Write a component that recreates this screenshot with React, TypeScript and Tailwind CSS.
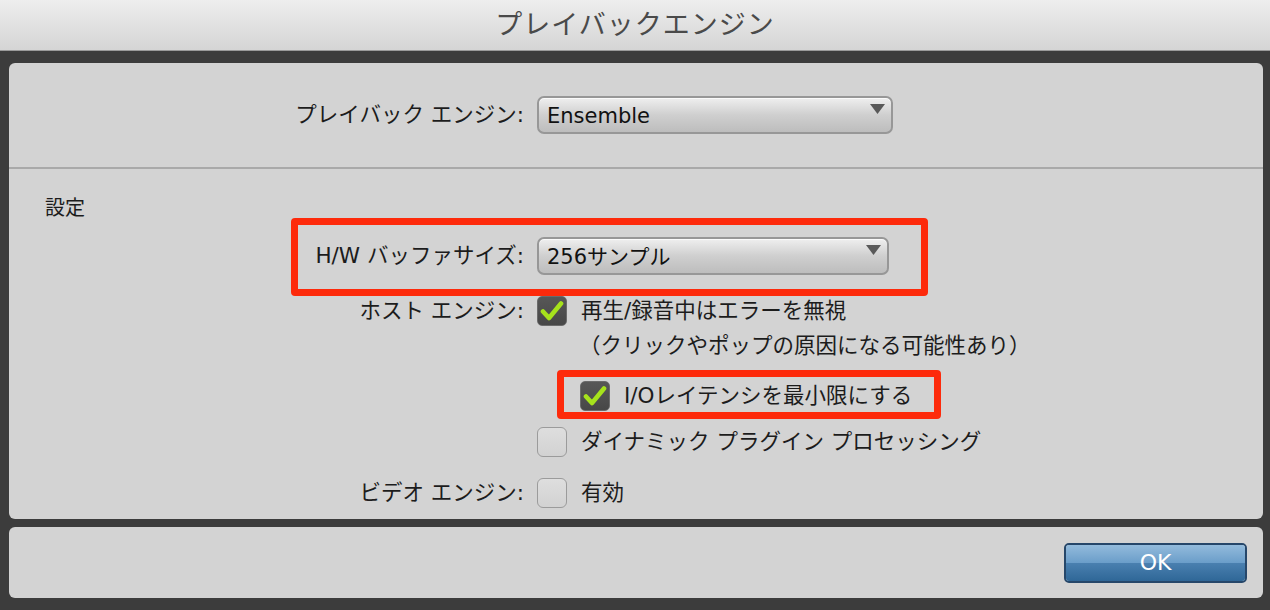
const font = { fontFamily: '"DejaVu Sans", "Noto Sans CJK JP", sans-serif' };

function Dropdown({ value, width }: { value: string; width: string }) {
  return (
    <div
      className={`relative flex h-[38px] items-center rounded-[7px] border-2 border-[#979797] bg-gradient-to-b from-[#efefef] via-[#cfcfcf] to-[#bdbdbd] pl-[8px] pt-[3px] text-[21px] text-[#111] shadow-[inset_0_1px_0_#fafafa] ${width}`}
    >
      <span className="leading-none">{value}</span>
      <svg className="absolute right-[6px] top-[6px]" width="15" height="10" viewBox="0 0 15 10">
        <path d="M0 0 L15 0 L7.5 10 Z" fill="#595959" />
      </svg>
    </div>
  );
}

function Checkbox({ checked }: { checked: boolean }) {
  if (checked) {
    return (
      <div className="flex h-[30px] w-[30px] shrink-0 items-center justify-center rounded-[5px] border border-[#6b6b6b] bg-gradient-to-b from-[#575757] to-[#474747]">
        <svg width="24" height="22" viewBox="0 0 24 22">
          <path
            d="M3 11.5 L9 18 L21 3.5"
            fill="none"
            stroke="#a6e21c"
            strokeWidth="4.6"
            strokeLinecap="round"
            strokeLinejoin="round"
          />
        </svg>
      </div>
    );
  }
  return (
    <div className="h-[30px] w-[30px] shrink-0 rounded-[6px] border-[1.5px] border-[#9b9b9b] bg-gradient-to-b from-[#dedede] to-[#d2d2d2]" />
  );
}

function Row({ label, children, className = "" }: { label?: string; children: React.ReactNode; className?: string }) {
  return (
    <div className={`flex items-center ${className}`}>
      <div className="w-[515px] shrink-0 text-right text-[21.5px] text-[#1c1c1c]">{label}</div>
      <div className="ml-[13px] flex items-center">{children}</div>
    </div>
  );
}

export default function App() {
  return (
    <div className="flex h-[610px] w-[1270px] flex-col bg-[#3c3c3c]" style={font}>
      {/* title bar */}
      <div className="flex h-[51px] shrink-0 items-center justify-center border-b border-[#9a9a9a] bg-gradient-to-b from-[#eeeeee] to-[#d5d5d5]">
        <span className="text-[27px] tracking-[1px] text-[#4a4a4a]">プレイバックエンジン</span>
      </div>

      <div className="flex flex-1 flex-col pl-[9px] pr-[7px] pt-[12px] pb-[12px]">
        {/* main panel */}
        <div className="flex h-[456px] flex-col rounded-[6px] bg-[#d3d3d3]">
          <div className="flex h-[104px] items-center">
            <Row label="プレイバック エンジン:" className="w-full">
              <Dropdown value="Ensemble" width="w-[356px]" />
            </Row>
          </div>
          <div className="h-[2px] bg-[#a9a9a9]" />

          <div className="flex flex-col">
            <div className="pl-[36px] pt-[27px] text-[20px] leading-[25px] text-[#1c1c1c]">設定</div>

            <div className="relative mt-[16px]">
              <Row label="H/W バッファサイズ:" className="h-[38px]">
                <Dropdown value="256サンプル" width="w-[352px]" />
              </Row>
              <div className="pointer-events-none absolute left-[282px] right-[335px] top-[-19px] bottom-[-21px] rounded-[4px] border-[7px] border-[#fd2a0b]" />
            </div>

            <Row label="ホスト エンジン:" className="mt-[21px] h-[30px]">
              <Checkbox checked />
              <span className="ml-[14px] text-[21.5px] text-[#1c1c1c]">再生/録音中はエラーを無視</span>
            </Row>

            <Row className="mt-[5px] h-[30px]">
              <span className="ml-[42px] text-[21.5px] text-[#1c1c1c]">（クリックやポップの原因になる可能性あり）</span>
            </Row>

            <div className="relative mt-[20px]">
              <Row className="h-[30px]">
                <div className="ml-[43px] flex items-center">
                  <Checkbox checked />
                  <span className="ml-[14px] text-[21.5px] text-[#1c1c1c]">I/Oレイテンシを最小限にする</span>
                </div>
              </Row>
              <div className="pointer-events-none absolute left-[548px] right-[322px] top-[-11px] bottom-[-8px] rounded-[4px] border-[7px] border-[#fd2a0b]" />
            </div>

            <Row className="mt-[16px] h-[30px]">
              <Checkbox checked={false} />
              <span className="ml-[14px] text-[21.5px] text-[#1c1c1c]">ダイナミック プラグイン プロセッシング</span>
            </Row>

            <Row label="ビデオ エンジン:" className="mt-[21px] h-[30px]">
              <Checkbox checked={false} />
              <span className="ml-[14px] text-[21.5px] text-[#1c1c1c]">有効</span>
            </Row>
          </div>
        </div>

        {/* bottom panel */}
        <div className="mt-[8px] flex h-[71px] items-center justify-end rounded-[6px] bg-[#d3d3d3] pr-[16px]">
          <button className="relative h-[40px] w-[183px] overflow-hidden rounded-[5px] border-2 border-[#26476a] text-[22px] text-white">
            <div className="absolute inset-0 flex flex-col">
              <div className="flex-1 bg-gradient-to-b from-[#93bbdc] to-[#6a9dc9]" />
              <div className="flex-1 bg-gradient-to-b from-[#4a80b0] to-[#2f6797]" />
            </div>
            <span className="relative">OK</span>
          </button>
        </div>
      </div>
    </div>
  );
}
